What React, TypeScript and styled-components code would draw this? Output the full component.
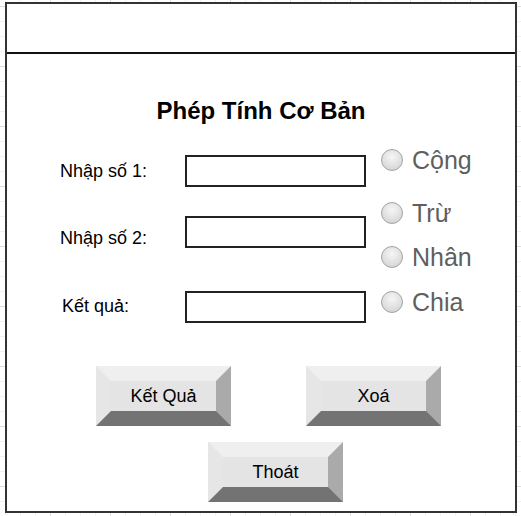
import React from "react";
import styled, { createGlobalStyle } from "styled-components";

const GlobalStyle = createGlobalStyle`
  html, body {
    margin: 0;
    height: 100%;
  }

  body {
    font-family: "Liberation Sans", Arial, sans-serif;
    background-color: #fff;
    background-image:
      linear-gradient(to right, #dedede 1px, transparent 1px),
      linear-gradient(to bottom, #dedede 1px, transparent 1px),
      linear-gradient(to right, #f1f1f1 1px, transparent 1px),
      linear-gradient(to bottom, #f1f1f1 1px, transparent 1px);
    background-size: 60px 60px, 60px 60px, 15px 15px, 15px 15px;
    background-position: 50px 0, 0 6px, 5px 0, 0 6px;
  }
`;

const Page = styled.div`
  padding: 2px 0 0 5px;
`;

const Frame = styled.div`
  width: 512px;
  height: 511px;
  box-sizing: border-box;
  border: 2px solid #333;
  background: #fff;
  display: flex;
  flex-direction: column;
`;

const TitleBar = styled.div`
  flex: none;
  height: 48px;
  border-bottom: 2px solid #111;
`;

const Body = styled.div`
  padding-top: 42px;
  display: flex;
  flex-direction: column;
`;

const Title = styled.h1`
  margin: 0;
  font-size: 24px;
  line-height: 30px;
  font-weight: bold;
  text-align: center;
  color: #000;
`;

const Form = styled.div`
  display: flex;
  margin-top: 20px;
  padding-left: 53px;
`;

const Fields = styled.div`
  display: flex;
  flex-direction: column;
  padding-top: 9px;
`;

const FieldRow = styled.div<{ $gap: number }>`
  display: flex;
  align-items: center;
  height: 32px;
  margin-top: ${(p) => p.$gap}px;
`;

const Label = styled.label<{ $dy?: number; $dx?: number }>`
  width: 125px;
  box-sizing: border-box;
  padding-left: ${(p) => p.$dx || 0}px;
  margin-top: ${(p) => (p.$dy || 0) * 2}px;
  font-size: 18px;
  color: #000;
`;

const TextBox = styled.input`
  width: 181px;
  height: 32px;
  box-sizing: border-box;
  border: 2px solid #222;
  background: #fff;
  outline: none;
`;

const Radios = styled.div`
  display: flex;
  flex-direction: column;
  margin-left: 15px;
`;

const Option = styled.label<{ $gap: number }>`
  display: flex;
  align-items: center;
  gap: 9px;
  height: 28px;
  margin-top: ${(p) => p.$gap}px;
  font-size: 25px;
  color: #5f5f5f;
`;

const Dot = styled.span`
  width: 22px;
  height: 22px;
  box-sizing: border-box;
  border-radius: 50%;
  border: 1px solid #a3a3a3;
  background: radial-gradient(circle at 50% 35%, #f6f6f6 0%, #dedede 60%, #cbcbcb 100%);
`;

const Actions = styled.div`
  display: flex;
  flex-direction: column;
  gap: 16px;
  margin-top: 43px;
`;

const ButtonRow = styled.div<{ $indent: number }>`
  display: flex;
  gap: 75px;
  padding-left: ${(p) => p.$indent}px;
`;

const BevelButton = styled.button`
  width: 135px;
  height: 60px;
  box-sizing: border-box;
  padding: 0;
  border-style: solid;
  border-width: 15px;
  border-color: #efefef #aaaaaa #737373 #e6e6e6;
  background: #e4e4e4;
  font-family: "Liberation Sans", Arial, sans-serif;
  font-size: 18px;
  color: #000;
  display: flex;
  align-items: center;
  justify-content: center;
`;

const fields = [
  { label: "Nhập số 1:", gap: 0, dy: 0, dx: 0 },
  { label: "Nhập số 2:", gap: 29, dy: 6, dx: 0 },
  { label: "Kết quả:", gap: 43, dy: -1, dx: 2 },
];

const options = [
  { text: "Cộng", gap: 0 },
  { text: "Trừ", gap: 25 },
  { text: "Nhân", gap: 16 },
  { text: "Chia", gap: 17 },
];

const App: React.FC = () => {
  return (
    <>
      <GlobalStyle />
      <Page>
        <Frame>
          <TitleBar />
          <Body>
            <Title>Phép Tính Cơ Bản</Title>
            <Form>
              <Fields>
                {fields.map((f) => (
                  <FieldRow key={f.label} $gap={f.gap}>
                    <Label $dy={f.dy} $dx={f.dx}>{f.label}</Label>
                    <TextBox type="text" />
                  </FieldRow>
                ))}
              </Fields>
              <Radios>
                {options.map((o) => (
                  <Option key={o.text} $gap={o.gap}>
                    <Dot />
                    {o.text}
                  </Option>
                ))}
              </Radios>
            </Form>
            <Actions>
              <ButtonRow $indent={89}>
                <BevelButton>Kết Quả</BevelButton>
                <BevelButton>Xoá</BevelButton>
              </ButtonRow>
              <ButtonRow $indent={201}>
                <BevelButton>Thoát</BevelButton>
              </ButtonRow>
            </Actions>
          </Body>
        </Frame>
      </Page>
    </>
  );
};

export default App;
